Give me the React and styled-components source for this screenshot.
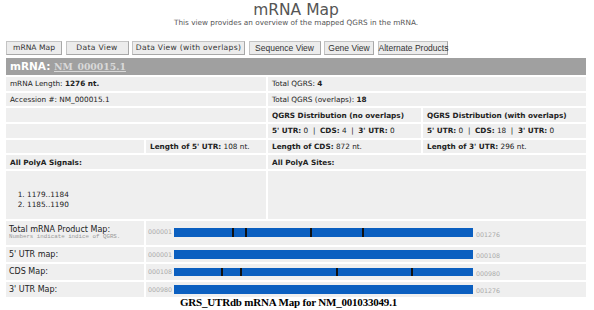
import React from "react";
import styled, { createGlobalStyle } from "styled-components";

const GlobalStyle = createGlobalStyle`
  body {
    margin: 0;
    background: #fff;
    font-family: "DejaVu Sans", Verdana, sans-serif;
    color: #222;
  }
`;

const tabs = [
  { name: "mRNA Map", w: 56 },
  { name: "Data View", w: 63, wide: true },
  { name: "Data View (with overlaps)", w: 113, wide: true },
  { name: "Sequence View", w: 72, arial: true },
  { name: "Gene View", w: 50, arial: true },
  { name: "Alternate Products", w: 70, arial: true },
];

const maps = [
  { label: "Total mRNA Product Map:", note: "Numbers indicate indice of QGRS.", from: "000001", to: "001276", ticks: [57.7, 71, 136, 187.7] },
  { label: "5' UTR map:", from: "000001", to: "000108", ticks: [] },
  { label: "CDS Map:", from: "000108", to: "000980", ticks: [47, 66, 161.7, 236.7] },
  { label: "3' UTR Map:", from: "000980", to: "001276", ticks: [] },
];

export default function App() {
  return (
    <>
      <GlobalStyle />
      <Page>
        <Heading>
          <Title>mRNA Map</Title>
          <Subtitle>This view provides an overview of the mapped QGRS in the mRNA.</Subtitle>
        </Heading>

        <Tabs>
          {tabs.map((t) => (
            <Tab key={t.name} $w={t.w} $arial={t.arial} $wide={t.wide}>
              {t.name}
            </Tab>
          ))}
        </Tabs>

        <HeaderBar>
          mRNA: <HeaderLink>NM_000015.1</HeaderLink>
        </HeaderBar>

        <Grid>
          <Cell $span={2}>mRNA Length:&nbsp;<b>1276 nt.</b></Cell>
          <Cell $span={2}>Total QGRS:&nbsp;<b>4</b></Cell>

          <Cell $span={2}>Accession #: NM_000015.1</Cell>
          <Cell $span={2}>Total QGRS (overlaps):&nbsp;<b>18</b></Cell>

          <Cell $span={2} />
          <Cell><b>QGRS Distribution (no overlaps)</b></Cell>
          <Cell><b>QGRS Distribution (with overlaps)</b></Cell>

          <Cell $span={2} />
          <Cell>
            <b>5' UTR:</b>&nbsp;0&nbsp;&nbsp;|&nbsp;&nbsp;<b>CDS:</b>&nbsp;4&nbsp;&nbsp;|&nbsp;&nbsp;<b>3' UTR:</b>&nbsp;0
          </Cell>
          <Cell>
            <b>5' UTR:</b>&nbsp;0&nbsp;&nbsp;|&nbsp;&nbsp;<b>CDS:</b>&nbsp;18&nbsp;&nbsp;|&nbsp;&nbsp;<b>3' UTR:</b>&nbsp;0
          </Cell>

          <Cell />
          <Cell><b>Length of 5' UTR:</b>&nbsp;108 nt.</Cell>
          <Cell><b>Length of CDS:</b>&nbsp;872 nt.</Cell>
          <Cell><b>Length of 3' UTR:</b>&nbsp;296 nt.</Cell>

          <Cell $span={2}><b>All PolyA Signals:</b></Cell>
          <Cell $span={2}><b>All PolyA Sites:</b></Cell>

          <Cell $span={2} $tall>
            <SiteList>
              <li>1179..1184</li>
              <li>1185..1190</li>
            </SiteList>
          </Cell>
          <Cell $span={2} $tall />

          {maps.map((m) => (
            <React.Fragment key={m.label}>
              <LabelCell $note={!!m.note}>
                <MapLabel>{m.label}</MapLabel>
                {m.note && <Note>{m.note}</Note>}
              </LabelCell>
              <MapCell $span={3} $note={!!m.note}>
                <Pos>{m.from}</Pos>
                <Bar>
                  {m.ticks.map((x) => (
                    <Tick key={x} style={{ left: x }} />
                  ))}
                </Bar>
                <Pos $end>{m.to}</Pos>
              </MapCell>
            </React.Fragment>
          ))}
        </Grid>

        <Caption>GRS_UTRdb mRNA Map for NM_001033049.1</Caption>
      </Page>
    </>
  );
}

const Page = styled.div`
  width: 580px;
  padding: 0 8px 0 6px;
`;

const Heading = styled.div`
  text-align: center;
  padding-top: 2px;
`;

const Title = styled.h1`
  margin: 0;
  font-size: 15.5px;
  line-height: 17px;
  font-weight: normal;
  color: #555;
`;

const Subtitle = styled.div`
  font-size: 7.3px;
  line-height: 7px;
  color: #555;
`;

const Tabs = styled.div`
  display: flex;
  gap: 3.5px;
  margin-top: 15px;
`;

const Tab = styled.button`
  width: ${({ $w }) => $w}px;
  height: 14px;
  padding: 0;
  background: #ececec;
  border: 1px solid #c4c4c4;
  border-bottom-color: #a8a8a8;
  border-right-color: #a8a8a8;
  font-family: ${({ $arial }) => ($arial ? '"Liberation Sans", Arial' : '"DejaVu Sans", Verdana')}, sans-serif;
  font-size: ${({ $arial }) => ($arial ? "8.5px" : "7.6px")};
  letter-spacing: ${({ $wide }) => ($wide ? "0.3px" : "0")};
  color: #333;
  line-height: 12px;
  white-space: nowrap;
`;

const HeaderBar = styled.div`
  margin-top: 3px;
  height: 17px;
  background: #a0a0a0;
  color: #fff;
  font-weight: bold;
  font-size: 10.5px;
  line-height: 17px;
  padding-left: 4px;
`;

const HeaderLink = styled.span`
  color: #d9d9d9;
  text-decoration: underline;
  font-family: "DejaVu Serif", serif;
  font-size: 9.3px;
`;

const Grid = styled.div`
  display: grid;
  grid-template-columns: 138px 120px 153px 163px;
  gap: 2px;
  margin-top: 2px;
`;

const Cell = styled.div`
  grid-column: span ${({ $span }) => $span || 1};
  background: #efefef;
  min-height: ${({ $tall }) => ($tall ? "48px" : "13.7px")};
  padding: 0 4px;
  display: flex;
  align-items: center;
  font-size: 7.3px;
  white-space: nowrap;
`;

const SiteList = styled.ol`
  margin: 0;
  padding: 10px 0 0 17px;
  font-size: 7.3px;
  line-height: 10px;
`;

const LabelCell = styled(Cell)`
  flex-direction: column;
  align-items: flex-start;
  justify-content: center;
  min-height: ${({ $note }) => ($note ? "23.5px" : "15.5px")};
  padding: 0 3px;
`;

const MapLabel = styled.div`
  font-size: 8px;
  line-height: 9px;
`;

const Note = styled.div`
  font-family: "Liberation Mono", monospace;
  font-size: 5.8px;
  line-height: 6px;
  color: #999;
`;

const MapCell = styled(Cell)`
  padding: 0 2px;
  align-items: ${({ $note }) => ($note ? "flex-start" : "center")};
  padding-top: ${({ $note }) => ($note ? "7px" : "0")};
`;

const Pos = styled.span`
  width: 26px;
  font-size: 6.3px;
  color: #aaa;
  margin-top: ${({ $end }) => ($end ? "3px" : "0")};
  padding-left: ${({ $end }) => ($end ? "3px" : "0")};
`;

const Bar = styled.div`
  position: relative;
  width: 299px;
  height: 8.5px;
  background: #0b5fc0;
`;

const Tick = styled.span`
  position: absolute;
  top: 0;
  bottom: 0;
  width: 2px;
  background: #111;
`;

const Caption = styled.div`
  width: fit-content;
  margin: 0 0 0 168px;
  padding: 0 6px;
  background: #fff;
  position: relative;
  font-family: "Liberation Serif", "Times New Roman", serif;
  font-weight: bold;
  font-size: 11px;
  line-height: 11px;
  color: #000;
  letter-spacing: -0.2px;
`;
